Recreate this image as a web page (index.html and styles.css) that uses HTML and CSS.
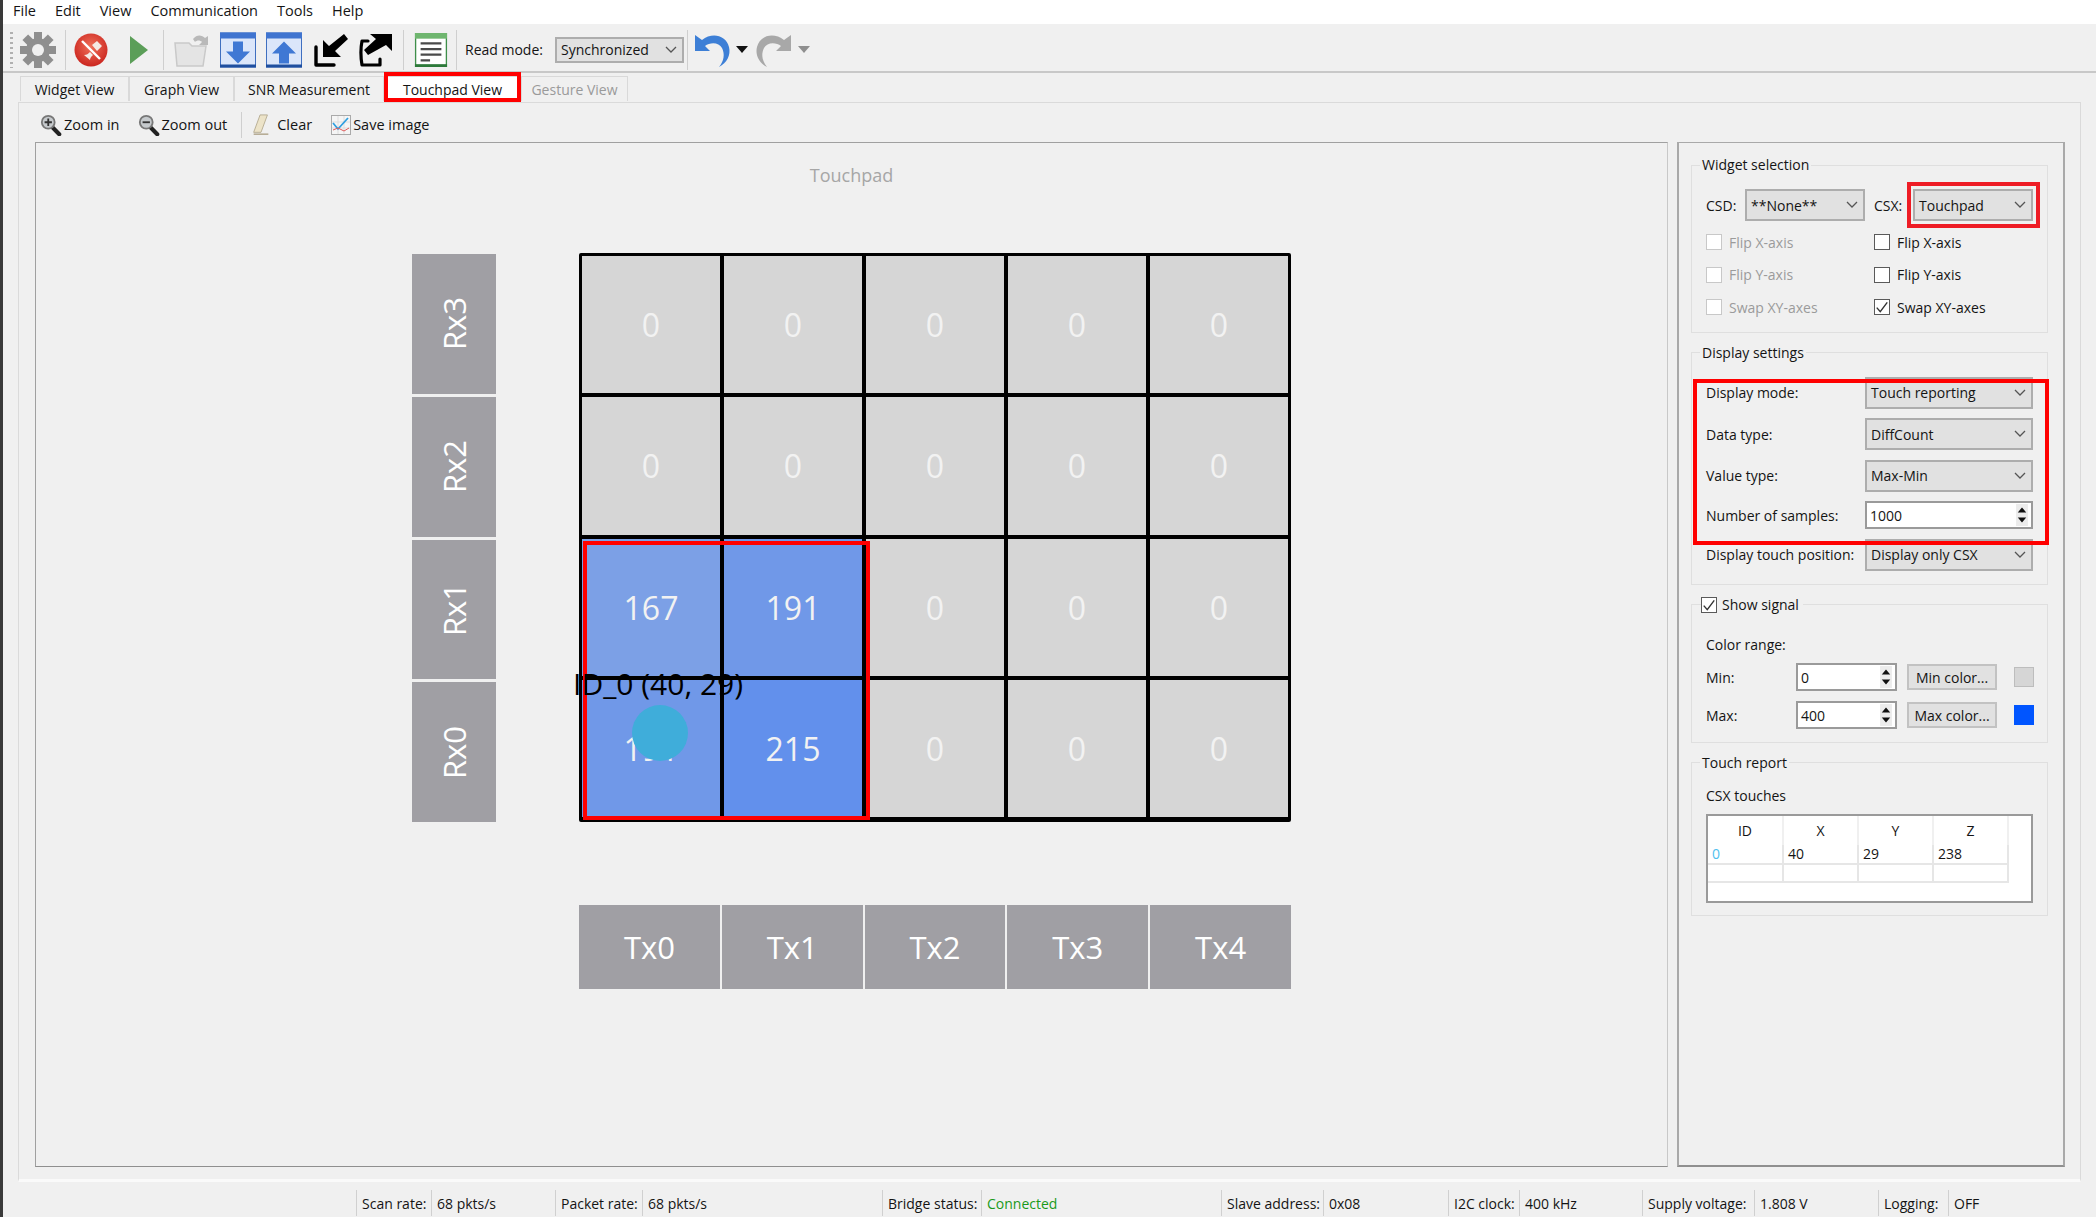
FILE: index.html
```html
<!DOCTYPE html>
<html lang="en">
<head>
    <meta charset="UTF-8">
    <title>Tuner - Touchpad View</title>
    <link rel="stylesheet" href="styles.css">
</head>
<body>
    <!-- shared small glyphs -->
    <svg class="defs" xmlns="http://www.w3.org/2000/svg">
        <symbol id="chev" viewBox="0 0 12 8"><path d="M1 1l5 5 5-5" fill="none" stroke="#555" stroke-width="1.3"/></symbol>
        <symbol id="spin" viewBox="0 0 14 26">
            <rect x="0" y="0" width="14" height="26" fill="#ececec"/>
            <path d="M7 4l5 6H2zM7 22l5-6H2z" fill="#111"/>
        </symbol>
        <symbol id="tick" viewBox="0 0 12 12"><path d="M1.5 6.5l3 3.5 6-8" fill="none" stroke="#333" stroke-width="1.2"/></symbol>
        <symbol id="lens" viewBox="0 0 24 24">
            <path d="M13 14l8 8" stroke="#222" stroke-width="4.5" stroke-linecap="round"/>
            <circle cx="9" cy="9" r="7" fill="#c6cacd" stroke="#777" stroke-width="2"/>
        </symbol>
    </svg>

    <nav class="menubar">
        <span>File</span><span>Edit</span><span>View</span><span>Communication</span><span>Tools</span><span>Help</span>
    </nav>

    <div class="toolbar">
        <span class="grip"></span>
        <svg class="tool w36" viewBox="0 0 36 36"><g fill="#8f8f8f"><circle cx="18" cy="18" r="12"/><rect x="14" y="0" width="8" height="8"/><rect x="14" y="28" width="8" height="8"/><rect x="0" y="14" width="8" height="8"/><rect x="28" y="14" width="8" height="8"/><rect x="14" y="0" width="8" height="8" transform="rotate(45 18 18)"/><rect x="14" y="28" width="8" height="8" transform="rotate(45 18 18)"/><rect x="0" y="14" width="8" height="8" transform="rotate(45 18 18)"/><rect x="28" y="14" width="8" height="8" transform="rotate(45 18 18)"/></g><circle cx="18" cy="18" r="6" fill="#f0f0f0"/></svg>
        <span class="tsep s1"></span>
        <svg class="tool w34 g1" viewBox="0 0 34 34"><defs><radialGradient id="redg" cx=".5" cy=".4" r=".65"><stop offset="0" stop-color="#f0705a"/><stop offset="1" stop-color="#c8201a"/></radialGradient></defs><circle cx="17" cy="17" r="16.5" fill="url(#redg)"/><path d="M8 8l18 18" stroke="#fff" stroke-width="2.4"/><path d="M10 22c3 0 4-1 6-3l3 3c-2 2-3 3-3 5zM18 12l5-4 5 5-5 5z" fill="#f5e9e4"/></svg>
        <svg class="tool w18 g2" viewBox="0 0 18 28"><path d="M0 0l18 14L0 28z" fill="#5b9e58"/></svg>
        <span class="tsep s2"></span>
        <svg class="tool w36 g3" viewBox="0 0 36 36"><path d="M2 11h14l3 3h14l-3 20H4z" fill="#e4e4e4" stroke="#c9c9c9" stroke-width="1.5"/><path d="M20 7c4-5 9-4 12-1l3-2v9h-9l3-3c-2-2-5-2-7 0z" fill="#b9b9b9"/></svg>
        <svg class="tool w36 g4" viewBox="0 0 36 35"><rect x=".5" y=".5" width="35" height="34" fill="#dbe6fa" stroke="#3f6fc0"/><rect x="0" y="0" width="36" height="6" fill="#3f74d0"/><rect x="0" y="32" width="36" height="3" fill="#1f4f9f"/><path d="M13 9h10v10h7L18 31 6 19h7z" fill="#3f78d4"/></svg>
        <svg class="tool w36 g5" viewBox="0 0 36 35"><rect x=".5" y=".5" width="35" height="34" fill="#dbe6fa" stroke="#3f6fc0"/><rect x="0" y="0" width="36" height="6" fill="#3f74d0"/><rect x="0" y="32" width="36" height="3" fill="#1f4f9f"/><path d="M13 31h10V21h7L18 9 6 21h7z" fill="#3f78d4"/></svg>
        <svg class="tool w34 g6" viewBox="0 0 34 34"><path d="M30 1l4 5-13 12 6 6H9V7l6 6z" fill="#000"/><path d="M2 14v18h18" fill="none" stroke="#000" stroke-width="3.4" stroke-linejoin="round" stroke-linecap="round"/></svg>
        <svg class="tool w34 g7" viewBox="0 0 34 34"><path d="M9 22l-4-5L17 6l-6-5h22v17l-6-6z" fill="#000"/><path d="M9 8H3c-1 5-2 12 0 24h18v-6" fill="none" stroke="#000" stroke-width="3.2" stroke-linejoin="round" stroke-linecap="round"/></svg>
        <span class="tsep s3"></span>
        <svg class="tool w34 g8" viewBox="0 0 34 36"><rect x=".7" y=".7" width="32.6" height="34.6" fill="#fff" stroke="#3f8f4a" stroke-width="1.4"/><rect x="0" y="0" width="34" height="6" fill="#6fb66f"/><rect x="0" y="33" width="34" height="3" fill="#2d7a3a"/><path d="M6 11h22M6 17h22M6 23h22M6 29h10" stroke="#4a4a4a" stroke-width="2.4"/></svg>
        <span class="tsep s4"></span>
        <span class="toollabel">Read mode:</span>
        <div class="combo readmode"><span>Synchronized</span><svg class="chev"><use href="#chev"/></svg></div>
        <span class="tsep s5"></span>
        <svg class="tool w36 g9" viewBox="0 0 36 36"><path d="M0 3v16h15l-5-5c5-4 14-4 17 2 3 6 2 13-3 19 8-4 12-12 10-20C31 3 17 0 7 8z" fill="#3d7fd6"/></svg>
        <span class="caret black"></span>
        <svg class="tool w36 g10" viewBox="0 0 36 36"><path d="M36 3v16H21l5-5c-5-4-14-4-17 2-3 6-2 13 3 19-8-4-12-12-10-20C5 3 19 0 29 8z" fill="#a8a8a8"/></svg>
        <span class="caret grey"></span>
    </div>

    <div class="tabs">
        <span class="tab t1">Widget View</span>
        <span class="tab t2">Graph View</span>
        <span class="tab t3">SNR Measurement</span>
        <span class="tab t4 active">Touchpad View</span>
        <span class="tab t5 disabled">Gesture View</span>
    </div>

    <main class="pane">
        <div class="subbar">
            <span class="subbtn zin">
                <span class="zoomicon"><svg viewBox="0 0 24 24"><use href="#lens"/><path d="M5 9h8M9 5v8" stroke="#333" stroke-width="2"/></svg></span>Zoom in
            </span>
            <span class="subbtn zout">
                <span class="zoomicon"><svg viewBox="0 0 24 24"><use href="#lens"/><path d="M5 9h8" stroke="#333" stroke-width="2"/></svg></span>Zoom out
            </span>
            <span class="subsep"></span>
            <span class="subbtn clr">
                <svg class="smallicon" viewBox="0 0 20 24"><path d="M9 1h8l-7 19H2z" fill="#ece3c8" stroke="#b5ab90"/><path d="M2 22h16" stroke="#b0a58c" stroke-width="1.6"/></svg>Clear
            </span>
            <span class="subbtn save">
                <svg class="smallicon" viewBox="0 0 20 20"><rect x=".5" y=".5" width="19" height="19" fill="#f5f5f5" stroke="#aaa"/><path d="M1 7h18M1 13h18M7 1v18M13 1v18" stroke="#ddd"/><path d="M2 8l5 6 10-11" fill="none" stroke="#2f9fe0" stroke-width="1.8"/><path d="M2 15l5-2 6 3 5-3" fill="none" stroke="#e05a5a" stroke-width="1"/></svg>Save image
            </span>
        </div>

        <div class="pane-body">
            <section class="plot">
                <div class="plot-title">Touchpad</div>
                <div class="sensor-grid">
                    <div class="rx-col">
                        <div class="rx"><span>Rx3</span></div>
                        <div class="rx"><span>Rx2</span></div>
                        <div class="rx"><span>Rx1</span></div>
                        <div class="rx"><span>Rx0</span></div>
                    </div>
                    <div class="cells">
                        <div class="cell">0</div><div class="cell">0</div><div class="cell">0</div><div class="cell">0</div><div class="cell">0</div>
                        <div class="cell">0</div><div class="cell">0</div><div class="cell">0</div><div class="cell">0</div><div class="cell">0</div>
                        <div class="cell c167">167</div><div class="cell c191">191</div><div class="cell">0</div><div class="cell">0</div><div class="cell">0</div>
                        <div class="cell c191">191</div><div class="cell c215">215</div><div class="cell">0</div><div class="cell">0</div><div class="cell">0</div>
                        <div class="touch-box"></div>
                        <div class="touch-dot"></div>
                        <div class="touch-label">ID_0 (40, 29)</div>
                    </div>
                    <div class="tx-row">
                        <div class="tx">Tx0</div><div class="tx">Tx1</div><div class="tx">Tx2</div><div class="tx">Tx3</div><div class="tx">Tx4</div>
                    </div>
                </div>
            </section>

            <aside class="side">
                <fieldset class="group widget-sel">
                    <legend>Widget selection</legend>
                    <div class="sel-row">
                        <label class="l-csd">CSD:</label>
                        <div class="combo"><span>**None**</span><svg class="chev"><use href="#chev"/></svg></div>
                        <label class="l-csx">CSX:</label>
                        <div class="combo csx"><span>Touchpad</span><svg class="chev"><use href="#chev"/></svg></div>
                    </div>
                    <div class="check-grid">
                        <div class="check off"><i class="box"></i>Flip X-axis</div>
                        <div class="check"><i class="box"></i>Flip X-axis</div>
                        <div class="check off"><i class="box"></i>Flip Y-axis</div>
                        <div class="check"><i class="box"></i>Flip Y-axis</div>
                        <div class="check off"><i class="box"></i>Swap XY-axes</div>
                        <div class="check"><i class="box"><svg><use href="#tick"/></svg></i>Swap XY-axes</div>
                    </div>
                </fieldset>

                <fieldset class="group display-set">
                    <legend>Display settings</legend>
                    <div class="form-grid">
                        <label>Display mode:</label>
                        <div class="combo"><span>Touch reporting</span><svg class="chev"><use href="#chev"/></svg></div>
                        <label>Data type:</label>
                        <div class="combo"><span>DiffCount</span><svg class="chev"><use href="#chev"/></svg></div>
                        <label>Value type:</label>
                        <div class="combo"><span>Max-Min</span><svg class="chev"><use href="#chev"/></svg></div>
                        <label>Number of samples:</label>
                        <div class="spin"><span>1000</span><svg class="spin-btn"><use href="#spin"/></svg></div>
                        <label>Display touch position:</label>
                        <div class="combo"><span>Display only CSX</span><svg class="chev"><use href="#chev"/></svg></div>
                    </div>
                </fieldset>

                <fieldset class="group signal">
                    <legend><span class="check"><i class="box dark"><svg><use href="#tick"/></svg></i>Show signal</span></legend>
                    <div class="caption">Color range:</div>
                    <div class="range-row">
                        <label>Min:</label>
                        <div class="spin"><span>0</span><svg class="spin-btn"><use href="#spin"/></svg></div>
                        <div class="btn">Min color...</div>
                        <div class="swatch min"></div>
                    </div>
                    <div class="range-row">
                        <label>Max:</label>
                        <div class="spin"><span>400</span><svg class="spin-btn"><use href="#spin"/></svg></div>
                        <div class="btn">Max color...</div>
                        <div class="swatch max"></div>
                    </div>
                </fieldset>

                <fieldset class="group report">
                    <legend>Touch report</legend>
                    <div class="caption">CSX touches</div>
                    <div class="table-wrap">
                        <table class="touches">
                            <thead><tr><th>ID</th><th>X</th><th>Y</th><th>Z</th></tr></thead>
                            <tbody>
                                <tr><td class="id">0</td><td>40</td><td>29</td><td>238</td></tr>
                                <tr><td></td><td></td><td></td><td></td></tr>
                            </tbody>
                        </table>
                    </div>
                </fieldset>
            </aside>
        </div>
    </main>

    <footer class="statusbar">
        <span class="st a">Scan rate:</span><span class="st b">68 pkts/s</span>
        <span class="st c">Packet rate:</span><span class="st d">68 pkts/s</span>
        <span class="st e">Bridge status:</span><span class="st f ok">Connected</span>
        <span class="st g">Slave address:</span><span class="st h">0x08</span>
        <span class="st i">I2C clock:</span><span class="st j">400 kHz</span>
        <span class="st k">Supply voltage:</span><span class="st l">1.808 V</span>
        <span class="st m">Logging:</span><span class="st n">OFF</span>
    </footer>

    <!-- red callouts drawn on top of the screenshot -->
    <div class="mark mark-tab"></div>
    <div class="mark mark-csx"></div>
    <div class="mark mark-display"></div>
</body>
</html>
```

FILE: styles.css
```css
:root {
    --font-main: "Open Sans", "Noto Sans", sans-serif;
    --bg: #f0f0f0;
    --text: #141414;
    --frame: #a9a9a9;
    --group: #dfdfdf;
    --combo: #e1e1e1;
    --combo-line: #adadad;
    --red: #ff0000;
    --label-grey: #a09fa4;
}

* { box-sizing: border-box; }

html, body { margin: 0; height: 100%; }

body {
    position: relative;
    width: 2096px;
    height: 1217px;
    overflow: hidden;
    font-family: var(--font-main);
    font-size: 14px;
    color: var(--text);
    background: var(--bg);
    border-left: 3px solid #3a3a3a;
}

.defs { display: none; }

/* menu */
.menubar {
    display: flex;
    gap: 19px;
    height: 24px;
    padding: 0 0 3px 10px;
    align-items: center;
    font-size: 14.5px;
    background: #fff;
}

/* toolbar */
.toolbar {
    display: flex;
    align-items: center;
    height: 49px;
    padding-top: 4px;
    border-bottom: 2px solid #c8c8c8;
}

.grip {
    width: 3px;
    height: 36px;
    margin-left: 7px;
    background: repeating-linear-gradient(#b0b0b0 0 2px, transparent 2px 5px);
}

.tool { display: block; flex: none; }
.w36 { width: 36px; height: 36px; }
.w34 { width: 34px; height: 34px; }
.w18 { width: 18px; height: 28px; }

.toolbar .tool:first-of-type { margin-left: 7px; }
.tsep { width: 1px; height: 40px; background: #cfcfcf; flex: none; }
.s1 { margin-left: 9px; }
.g1 { margin-left: 8px; }
.g2 { margin-left: 22px; }
.s2 { margin-left: 15px; }
.g3 { margin-left: 9px; }
.g4 { margin-left: 11px; }
.g5 { margin-left: 10px; }
.g6 { margin-left: 12px; }
.g7 { margin-left: 11px; }
.s3 { margin-left: 10px; }
.g8 { margin-left: 10px; }
.s4 { margin-left: 8px; }

.toollabel { margin-left: 8px; }

.combo {
    display: flex;
    align-items: center;
    justify-content: space-between;
    height: 32px;
    padding: 0 5px 0 4px;
    background: var(--combo);
    border: 2px solid var(--combo-line);
}

.chev { width: 12px; height: 8px; flex: none; }

.readmode { width: 129px; height: 26px; margin-left: 12px; }
.s5 { margin-left: 3px; }
.g9 { margin-left: 7px; }
.g10 { margin-left: 7px; }

.caret {
    width: 0;
    height: 0;
    margin-left: 5px;
    border-left: 6px solid transparent;
    border-right: 6px solid transparent;
    border-top: 7px solid #111;
}
.caret.grey { border-top-color: #8f8f8f; margin-left: 7px; }

/* tabs */
.tabs {
    display: flex;
    height: 25px;
    margin: 3px 0 0 17px;
}

.tab {
    display: flex;
    align-items: center;
    justify-content: center;
    background: var(--bg);
    border: 1px solid #d9d9d9;
    border-bottom: 0;
}
.t1 { width: 109px; }
.t2 { width: 105px; }
.t3 { width: 150px; }
.t4 { width: 137px; }
.t5 { width: 107px; }
.tab.active { background: #fff; }
.tab.disabled { color: #9a9a9a; }

/* tab page */
.pane {
    width: 2063px;
    height: 1080px;
    margin: 1px 0 0 15px;
    padding: 0 14px 15px 16px;
    background: var(--bg);
    border: 1px solid #dadada;
    border-bottom: 3px solid #fafafa;
}

.subbar {
    display: flex;
    align-items: center;
    height: 39px;
    padding-top: 4px;
    font-size: 14.5px;
}

.subbtn { display: flex; align-items: center; gap: 2px; }
.zin { margin-left: 5px; }
.zout { margin-left: 18px; }
.clr { margin-left: 9px; gap: 6px; }
.save { margin-left: 19px; }

.zoomicon svg { display: block; width: 22px; height: 22px; }
.smallicon { width: 20px; height: 22px; display: block; }

.subsep { width: 1px; height: 26px; margin-left: 14px; background: #cfcfcf; }

.pane-body { display: flex; gap: 9px; height: 1025px; }

/* plot */
.plot {
    width: 1633px;
    border: 1px solid #a0a0a0;
    border-right-color: #c8c8c8;
    border-bottom-color: #8f8f8f;
}

.plot-title {
    height: 24px;
    margin-top: 20px;
    text-align: center;
    font-size: 18px;
    line-height: 24px;
    color: #a6a6a6;
}

.sensor-grid {
    display: grid;
    grid-template-columns: 84px 712px;
    grid-template-rows: 569px 84px;
    column-gap: 83px;
    row-gap: 83px;
    margin: 66px 0 0 376px;
}

.rx-col {
    display: grid;
    grid-template-rows: repeat(4, 1fr);
    gap: 3px;
    padding-top: 1px;
}

.rx, .tx {
    display: flex;
    align-items: center;
    justify-content: center;
    background: var(--label-grey);
    color: #fff;
    font-size: 31px;
}
.rx span { writing-mode: vertical-rl; transform: rotate(180deg); }

.tx-row {
    grid-column: 2;
    display: grid;
    grid-template-columns: repeat(5, 1fr);
    gap: 2px;
}

.cells {
    position: relative;
    display: grid;
    grid-template-columns: repeat(5, 1fr);
    grid-template-rows: repeat(4, 1fr);
    gap: 4px;
    padding-bottom: 2px;
    border: 3px solid #000;
    border-radius: 2px;
    background: #000;
}

.cell {
    display: flex;
    align-items: center;
    justify-content: center;
    background: #d6d6d6;
    color: #f2f2f2;
    font-size: 32px;
}
.c167 { background: #7ca0e6; }
.c191 { background: #7098e8; }
.c215 { background: #6290ec; }

.touch-box {
    position: absolute;
    left: 1px;
    top: 285px;
    width: 287px;
    height: 279px;
    border: 4px solid var(--red);
}

.touch-dot {
    position: absolute;
    left: 50px;
    top: 449px;
    width: 56px;
    height: 56px;
    border-radius: 50%;
    background: #3fadda;
}

.touch-label {
    position: absolute;
    left: -9px;
    top: 408px;
    font-size: 30px;
    line-height: 40px;
    color: #000;
    white-space: nowrap;
}

/* settings column */
.side {
    width: 388px;
    padding: 12px 15px 0 12px;
    border: 2px solid var(--frame);
    border-top-width: 1px;
    border-bottom-color: #8f8f8f;
}

.group {
    margin: 0 0 10px;
    padding: 14px 14px 8px;
    border: 1px solid var(--group);
}

.group legend {
    height: 20px;
    margin-left: -6px;
    padding: 0 2px;
    line-height: 20px;
}

.sel-row { display: flex; align-items: center; height: 32px; }
.sel-row .combo { width: 120px; }
.sel-row label { width: 39px; }
.sel-row .l-csx { margin-left: 9px; }

.check-grid {
    display: grid;
    grid-template-columns: 168px 1fr;
    grid-auto-rows: 32.5px;
    margin-top: 5px;
}

.check { display: flex; align-items: center; gap: 7px; }
.check.off { color: #9b9b9b; }

.box {
    display: block;
    width: 16px;
    height: 16px;
    flex: none;
    background: #fff;
    border: 1px solid #5a5a5a;
}
.box svg { display: block; width: 14px; height: 14px; }
.off .box { border-color: #c8c8c8; }

.form-grid {
    display: grid;
    grid-template-columns: 159px 168px;
    row-gap: 9.5px;
    align-items: center;
}

.spin {
    display: flex;
    align-items: center;
    justify-content: space-between;
    height: 28px;
    padding: 0 2px 0 3px;
    background: #fff;
    border: 2px solid #9a9a9a;
}
.spin-btn { width: 14px; height: 22px; flex: none; }

.display-set { padding-bottom: 13px; }

.caption { height: 24px; line-height: 24px; }

.signal { padding-top: 18px; padding-bottom: 12px; }
.signal legend { margin-left: -5px; padding: 0; }
.signal .check { gap: 5px; padding-right: 4px; }

.range-row {
    display: grid;
    grid-template-columns: 90px 101px 90px 20px;
    align-items: center;
    height: 29px;
    margin-top: 9px;
}
.range-row .btn { margin-left: 10px; }
.range-row .swatch { margin-left: 27px; }
.caption + .range-row { margin-top: 6px; }

.btn {
    display: flex;
    align-items: center;
    justify-content: center;
    width: 90px;
    height: 26px;
    background: var(--combo);
    border: 2px solid #c2c2c2;
}

.swatch { width: 20px; height: 20px; }
.swatch.min { background: #d6d6d6; border: 1px solid #bdbdbd; }
.swatch.max { background: #0055ff; }

.report { padding-top: 11px; padding-bottom: 12px; }

.table-wrap {
    height: 89px;
    margin-top: 6px;
    background: #fff;
    border: 2px solid #9a9a9a;
}

.touches {
    table-layout: fixed;
    width: 300px;
    border-collapse: collapse;
}

.touches th {
    width: 75px;
    height: 29px;
    font-weight: 400;
    border-right: 2px solid #f0f0f0;
}

.touches td {
    height: 18px;
    padding: 0 0 0 4px;
    line-height: 18px;
    border-right: 2px solid #e6e6e6;
    border-bottom: 2px solid #e6e6e6;
}

.touches .id { color: #4fc0ee; }

/* status bar */
.statusbar {
    display: grid;
    grid-template-columns: 75px 124px 87px 240px 99px 240px 102px 125px 71px 123px 112px 124px 70px 124px;
    height: 26px;
    margin: 8px 0 0 353px;
}

.st {
    display: flex;
    align-items: center;
    padding-left: 5px;
    border-left: 1px solid #d0d0d0;
    font-size: 14px;
    white-space: nowrap;
}
.ok { color: #1a9a1a; }

/* red callouts */
.mark {
    position: absolute;
    border: 4px solid var(--red);
    pointer-events: none;
}
.mark-tab { left: 381px; top: 72px; width: 137px; height: 30px; }
.mark-csx { left: 1904px; top: 182px; width: 133px; height: 46px; border-color: #ee1c25; }
.mark-display { left: 1690px; top: 379px; width: 356px; height: 166px; }
```
